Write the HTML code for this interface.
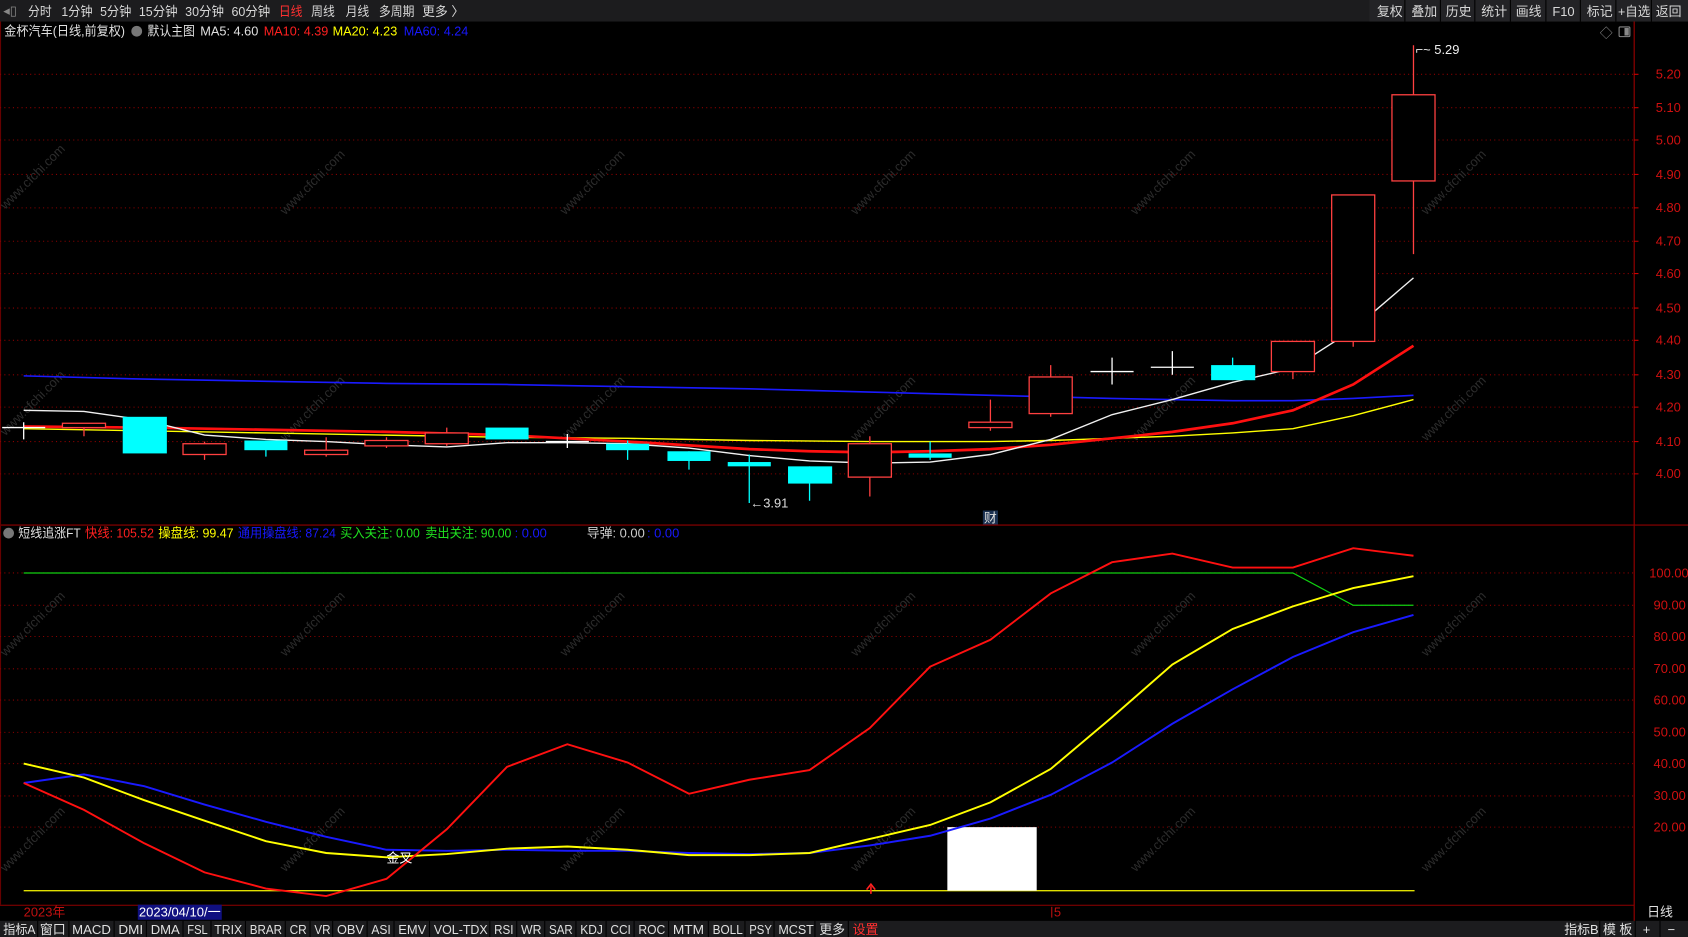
<!DOCTYPE html>
<html><head><meta charset="utf-8"><style>
html,body{margin:0;padding:0;background:#000;width:1688px;height:937px;overflow:hidden}
svg{display:block}
text{font-family:"Liberation Sans","Noto Sans CJK SC",sans-serif;font-size:12px}
</style></head><body>
<svg width="1688" height="937" viewBox="0 0 1568 870" preserveAspectRatio="none" xmlns="http://www.w3.org/2000/svg">
<rect width="1568" height="870" fill="#000"/>
<!-- top bar -->
<rect x="0" y="0" width="1568" height="20" fill="#1c1c1e"/>
<g fill="#d8d8d8">
<text x="3" y="14" fill="#888" font-size="10">◂▯</text>
<text x="26" y="15" textLength="22" lengthAdjust="spacingAndGlyphs">分时</text><text x="57" y="15" textLength="29" lengthAdjust="spacingAndGlyphs">1分钟</text><text x="93" y="15" textLength="29" lengthAdjust="spacingAndGlyphs">5分钟</text>
<text x="129" y="15" textLength="36" lengthAdjust="spacingAndGlyphs">15分钟</text><text x="172" y="15" textLength="36" lengthAdjust="spacingAndGlyphs">30分钟</text><text x="215" y="15" textLength="36" lengthAdjust="spacingAndGlyphs">60分钟</text>
<text x="259" y="15" fill="#ff3030" textLength="22" lengthAdjust="spacingAndGlyphs">日线</text><text x="289" y="15" textLength="22" lengthAdjust="spacingAndGlyphs">周线</text><text x="321" y="15" textLength="22" lengthAdjust="spacingAndGlyphs">月线</text>
<text x="352" y="15" textLength="33" lengthAdjust="spacingAndGlyphs">多周期</text><text x="392" y="15">更多 〉</text>
</g>
<g fill="#d8d8d8">
<rect x="1272" y="0" width="296" height="20" fill="#232326"/>
<text x="1279" y="15">复权</text><text x="1311" y="15">叠加</text><text x="1343" y="15">历史</text>
<text x="1376" y="15">统计</text><text x="1408" y="15">画线</text><text x="1442" y="15">F10</text>
<text x="1474" y="15">标记</text><text x="1503" y="15" textLength="30" lengthAdjust="spacingAndGlyphs">+自选</text><text x="1538" y="15">返回</text>
</g>
<g stroke="#000" stroke-width="1"><path d="M1305 0V20M1338 0V20M1370 0V20M1403 0V20M1436 0V20M1468 0V20M1501 0V20M1534 0V20"/></g>
<!-- info line -->
<text x="4" y="33" fill="#e0e0e0" textLength="112" lengthAdjust="spacingAndGlyphs">金杯汽车(日线,前复权)</text>
<circle cx="127" cy="29" r="5" fill="#777"/>
<text x="137" y="33" fill="#e0e0e0" textLength="44" lengthAdjust="spacingAndGlyphs">默认主图</text>
<text x="186" y="33" fill="#e0e0e0" textLength="54" lengthAdjust="spacingAndGlyphs">MA5: 4.60</text>
<text x="245" y="33" fill="#ff2020" textLength="60" lengthAdjust="spacingAndGlyphs">MA10: 4.39</text>
<text x="309" y="33" fill="#ffff00" textLength="60" lengthAdjust="spacingAndGlyphs">MA20: 4.23</text>
<text x="375" y="33" fill="#1818ff" textLength="60" lengthAdjust="spacingAndGlyphs">MA60: 4.24</text>
<text x="1486" y="35" fill="#888">◇</text>
<rect x="1504" y="25" width="10" height="9" fill="none" stroke="#888" rx="1"/><rect x="1509" y="26" width="4" height="7" fill="#888"/>
<!-- axes frame -->
<path d="M1518 20V870" stroke="#a00000"/>
<path d="M0 487.5H1568M0 840.5H1518" stroke="#900000"/>
<path d="M0.5 20V840" stroke="#600"/>
<!-- main grid -->
<g stroke="#8a0000" stroke-dasharray="1,3">
<path d="M0 69H1518M0 100H1518M0 130H1518M0 162H1518M0 193H1518M0 224H1518M0 254H1518M0 286H1518M0 316H1518M0 348H1518M0 378H1518M0 410H1518M0 440H1518"/>
<path d="M0 532H1518M0 562H1518M0 591H1518M0 621H1518M0 650H1518M0 680H1518M0 709H1518M0 739H1518M0 768H1518"/>
</g>
<g fill="#d01010" font-size="11">
<text x="1538" y="73">5.20</text><text x="1538" y="104">5.10</text><text x="1538" y="134">5.00</text>
<text x="1538" y="166">4.90</text><text x="1538" y="197">4.80</text><text x="1538" y="228">4.70</text>
<text x="1538" y="258">4.60</text><text x="1538" y="290">4.50</text><text x="1538" y="320">4.40</text>
<text x="1538" y="352">4.30</text><text x="1538" y="382">4.20</text><text x="1538" y="414">4.10</text>
<text x="1538" y="444">4.00</text>
<text x="1532" y="536">100.00</text><text x="1536" y="566">90.00</text><text x="1536" y="595">80.00</text>
<text x="1536" y="625">70.00</text><text x="1536" y="654">60.00</text><text x="1536" y="684">50.00</text>
<text x="1536" y="713">40.00</text><text x="1536" y="743">30.00</text><text x="1536" y="772">20.00</text>
</g>
<g stroke="#c00" ><path d="M1518 69h4M1518 100h4M1518 130h4M1518 162h4M1518 193h4M1518 224h4M1518 254h4M1518 286h4M1518 316h4M1518 348h4M1518 378h4M1518 410h4M1518 440h4"/></g>
<!-- watermarks -->
<g fill="#2c2c2c" font-size="24" font-family="Liberation Sans,sans-serif">
<text transform="translate(5,195) rotate(-45)">www.cfchi.com</text>
<text transform="translate(265,200) rotate(-45)">www.cfchi.com</text>
<text transform="translate(525,200) rotate(-45)">www.cfchi.com</text>
<text transform="translate(795,200) rotate(-45)">www.cfchi.com</text>
<text transform="translate(1055,200) rotate(-45)">www.cfchi.com</text>
<text transform="translate(1325,200) rotate(-45)">www.cfchi.com</text>
<text transform="translate(5,405) rotate(-45)">www.cfchi.com</text>
<text transform="translate(265,410) rotate(-45)">www.cfchi.com</text>
<text transform="translate(525,410) rotate(-45)">www.cfchi.com</text>
<text transform="translate(795,410) rotate(-45)">www.cfchi.com</text>
<text transform="translate(1055,410) rotate(-45)">www.cfchi.com</text>
<text transform="translate(1325,410) rotate(-45)">www.cfchi.com</text>
<text transform="translate(5,610) rotate(-45)">www.cfchi.com</text>
<text transform="translate(265,610) rotate(-45)">www.cfchi.com</text>
<text transform="translate(525,610) rotate(-45)">www.cfchi.com</text>
<text transform="translate(795,610) rotate(-45)">www.cfchi.com</text>
<text transform="translate(1055,610) rotate(-45)">www.cfchi.com</text>
<text transform="translate(1325,610) rotate(-45)">www.cfchi.com</text>
<text transform="translate(5,810) rotate(-45)">www.cfchi.com</text>
<text transform="translate(265,810) rotate(-45)">www.cfchi.com</text>
<text transform="translate(525,810) rotate(-45)">www.cfchi.com</text>
<text transform="translate(795,810) rotate(-45)">www.cfchi.com</text>
<text transform="translate(1055,810) rotate(-45)">www.cfchi.com</text>
<text transform="translate(1325,810) rotate(-45)">www.cfchi.com</text>
</g>
<!-- MAs -->
<polyline fill="none" stroke="#1a1aff" stroke-width="1.5" points="22,349 134,352 247,354 359,356 471,357 583,359 696,361 808,364 920,367 1033,370 1145,372 1201,372 1257,370 1313,367"/>
<polyline fill="none" stroke="#ffff00" stroke-width="1.3" points="22,398 134,400 247,402 359,404 471,406 583,407 696,409 808,410 920,410 976,409 1033,407 1089,405 1145,402 1201,398 1257,386 1313,371"/>
<polyline fill="none" stroke="#ff1010" stroke-width="2.5" points="22,396 134,397 247,399 359,401 471,404 583,410 696,417 752,419 808,420 864,419 920,417 976,413 1033,407 1089,401 1145,393 1201,381 1257,357 1313,321"/>
<polyline fill="none" stroke="#f0f0f0" stroke-width="1.3" points="22,381 78,382 134,390 190,404 247,408 303,410 359,413 415,415 471,411 527,411 583,412 640,416 696,423 752,428 808,430 864,429 920,422 976,408 1033,385 1089,371 1145,355 1201,342 1257,306 1313,258"/>
<!-- candles -->
<g stroke="#ff4040" fill="none" stroke-width="1.2">
<path d="M78 393V405M190 410V427M303 406V424M359 406V416M415 397V414M808 405V461M920 371V400M976 339V387M1201 317V352M1257 181V322M1313 42V236"/>
</g>
<g stroke="#ff4040" fill="#000" stroke-width="1.2">
<rect x="58" y="393" width="40" height="4"/>
<rect x="170" y="412" width="40" height="10"/>
<rect x="283" y="418" width="40" height="4"/>
<rect x="339" y="409" width="40" height="5"/>
<rect x="395" y="402" width="40" height="10"/>
<rect x="788" y="412" width="40" height="31"/>
<rect x="900" y="392" width="40" height="5"/>
<rect x="956" y="350" width="40" height="34"/>
<rect x="1181" y="317" width="40" height="28"/>
<rect x="1237" y="181" width="40" height="136"/>
<rect x="1293" y="88" width="40" height="80"/>
</g>
<g stroke="#00ffff" stroke-width="1.2"><path d="M247 409V424M583 409V427M640 419V436M696 422V467M752 433V465M864 410V427M1145 332V353"/></g>
<g fill="#00ffff">
<rect x="114" y="387" width="41" height="34"/>
<rect x="227" y="409" width="40" height="9"/>
<rect x="451" y="397" width="40" height="11"/>
<rect x="563" y="412" width="40" height="6"/>
<rect x="620" y="419" width="40" height="9"/>
<rect x="676" y="429" width="40" height="4"/>
<rect x="732" y="433" width="41" height="16"/>
<rect x="844" y="421" width="40" height="4"/>
<rect x="1125" y="339" width="41" height="14"/>
</g>
<g stroke="#fff" stroke-width="1.2"><path d="M2 397H42M22 392V408M507 410H547M527 403V416M1013 345H1053M1033 332V357M1069 341H1109M1089 326V348"/></g>
<text x="697" y="471" fill="#ddd" font-size="11">←3.91</text>
<text x="1315" y="50" fill="#eee" font-size="11">⌐~ 5.29</text>
<rect x="913" y="474" width="14" height="13" fill="#1a3050"/>
<text x="914" y="485" fill="#ddd" font-size="11">财</text>
<!-- lower info -->
<circle cx="8" cy="495" r="5" fill="#777"/>
<text x="17" y="499" fill="#e0e0e0" textLength="58" lengthAdjust="spacingAndGlyphs">短线追涨FT</text>
<text x="79" y="499" fill="#ff2020" textLength="64" lengthAdjust="spacingAndGlyphs">快线: 105.52</text>
<text x="147" y="499" fill="#ffff00" textLength="70" lengthAdjust="spacingAndGlyphs">操盘线: 99.47</text>
<text x="221" y="499" fill="#1818ff" textLength="91" lengthAdjust="spacingAndGlyphs">通用操盘线: 87.24</text>
<text x="316" y="499" fill="#20e020" textLength="74" lengthAdjust="spacingAndGlyphs">买入关注: 0.00</text>
<text x="395" y="499" fill="#20e020" textLength="80" lengthAdjust="spacingAndGlyphs">卖出关注: 90.00</text>
<text x="478" y="499" fill="#1818ff">: 0.00</text>
<text x="545" y="499" fill="#ccc">导弹: 0.00</text>
<text x="601" y="499" fill="#1818ff">: 0.00</text>
<!-- lower lines -->
<path d="M22 827H1314" stroke="#e0e000" stroke-width="1.3"/>
<polyline fill="none" stroke="#10d010" stroke-width="1.2" points="22,532 1201,532 1257,562 1313,562"/>
<rect x="880" y="768" width="83" height="59" fill="#fff"/>
<polyline fill="none" stroke="#1a1aff" stroke-width="1.8" points="22,727 78,719 134,730 190,747 247,763 303,777 359,789 415,790 471,789 527,790 583,790 640,792 696,793 752,792 808,785 864,776 920,760 976,738 1033,708 1089,672 1145,640 1201,610 1257,587 1313,571"/>
<polyline fill="none" stroke="#ffff00" stroke-width="1.8" points="22,709 78,722 134,743 190,762 247,781 303,792 359,796 415,793 471,788 527,786 583,789 640,794 696,794 752,792 808,779 864,766 920,745 976,714 1033,666 1089,617 1145,584 1201,563 1257,546 1313,535"/>
<polyline fill="none" stroke="#ff1010" stroke-width="1.8" points="22,727 78,752 134,783 190,810 247,825 303,832 359,816 415,770 471,712 527,691 583,708 640,737 696,724 752,715 808,676 864,619 920,594 976,551 1033,522 1089,514 1145,527 1201,527 1257,509 1313,516"/>
<text x="359" y="801" fill="#fff" font-size="11">金叉</text>
<path d="M809 830V823M805 826L809 821L813 826" stroke="#ff2020" fill="none" stroke-width="1.5"/>
<!-- date row -->
<text x="22" y="851" fill="#c01010">2023年</text>
<rect x="128" y="840" width="78" height="14" fill="#101080"/>
<text x="129" y="851" fill="#fff" textLength="76" lengthAdjust="spacingAndGlyphs">2023/04/10/一</text>
<path d="M977 842V852" stroke="#c01010"/><text x="979" y="851" fill="#c01010" font-size="11">5</text>
<text x="1530" y="851" fill="#e0e0e0">日线</text>
<!-- bottom bar -->
<rect x="0" y="855" width="1568" height="15" fill="#1c1c1e"/>
<g fill="#e0e0e0" font-size="11.5" lengthAdjust="spacingAndGlyphs">
<text x="3" y="867" textLength="30" lengthAdjust="spacingAndGlyphs">指标A</text><text x="37" y="867" textLength="24" lengthAdjust="spacingAndGlyphs">窗口</text><text x="67" y="867" textLength="36" lengthAdjust="spacingAndGlyphs">MACD</text>
<text x="110" y="867" textLength="23" lengthAdjust="spacingAndGlyphs">DMI</text><text x="140" y="867" textLength="27" lengthAdjust="spacingAndGlyphs">DMA</text><text x="174" y="867" textLength="19" lengthAdjust="spacingAndGlyphs">FSL</text>
<text x="199" y="867" textLength="26" lengthAdjust="spacingAndGlyphs">TRIX</text><text x="232" y="867" textLength="30" lengthAdjust="spacingAndGlyphs">BRAR</text><text x="269" y="867" textLength="16" lengthAdjust="spacingAndGlyphs">CR</text>
<text x="292" y="867" textLength="15" lengthAdjust="spacingAndGlyphs">VR</text><text x="313" y="867" textLength="25" lengthAdjust="spacingAndGlyphs">OBV</text><text x="345" y="867" textLength="18" lengthAdjust="spacingAndGlyphs">ASI</text>
<text x="370" y="867" textLength="26" lengthAdjust="spacingAndGlyphs">EMV</text><text x="403" y="867" textLength="50" lengthAdjust="spacingAndGlyphs">VOL-TDX</text><text x="459" y="867" textLength="18" lengthAdjust="spacingAndGlyphs">RSI</text>
<text x="484" y="867" textLength="19" lengthAdjust="spacingAndGlyphs">WR</text><text x="510" y="867" textLength="22" lengthAdjust="spacingAndGlyphs">SAR</text><text x="539" y="867" textLength="21" lengthAdjust="spacingAndGlyphs">KDJ</text>
<text x="567" y="867" textLength="19" lengthAdjust="spacingAndGlyphs">CCI</text><text x="593" y="867" textLength="25" lengthAdjust="spacingAndGlyphs">ROC</text><text x="625" y="867" textLength="29" lengthAdjust="spacingAndGlyphs">MTM</text>
<text x="662" y="867" textLength="28" lengthAdjust="spacingAndGlyphs">BOLL</text><text x="696" y="867" textLength="21" lengthAdjust="spacingAndGlyphs">PSY</text><text x="723" y="867" textLength="33" lengthAdjust="spacingAndGlyphs">MCST</text>
<text x="761" y="867" textLength="24" lengthAdjust="spacingAndGlyphs">更多</text><text x="792" y="867" fill="#ff3030" textLength="24" lengthAdjust="spacingAndGlyphs">设置</text>
<text x="1453" y="867">指标B</text><text x="1489" y="867">模 板</text>
<text x="1526" y="867">+</text><text x="1549" y="867">−</text>
</g>
<g stroke="#000"><path d="M35 855V870M64 855V870M106 855V870M136 855V870M170 855V870M196 855V870M228 855V870M265 855V870M288 855V870M309 855V870M341 855V870M366 855V870M399 855V870M455 855V870M480 855V870M506 855V870M535 855V870M563 855V870M589 855V870M621 855V870M658 855V870M692 855V870M719 855V870M757 855V870M788 855V870M1486 855V870M1519 855V870M1542 855V870"/></g>
</svg>
</body></html>
